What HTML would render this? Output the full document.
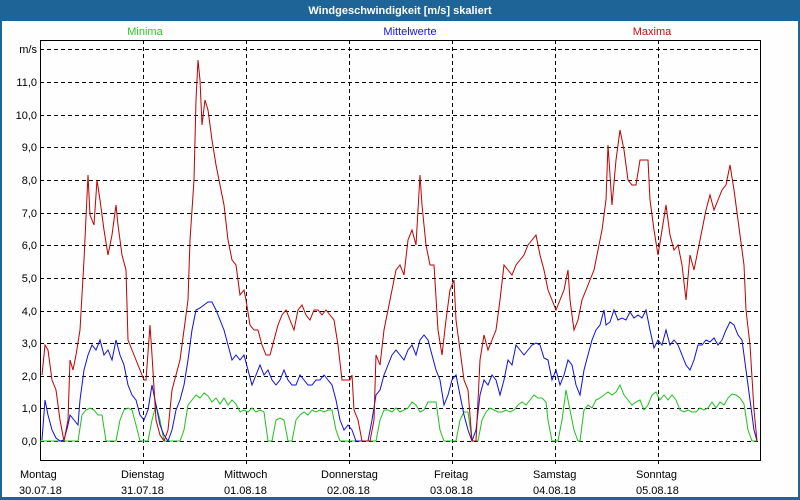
<!DOCTYPE html>
<html><head><meta charset="utf-8"><style>
html,body{margin:0;padding:0;width:800px;height:500px;overflow:hidden;background:#fff;font-family:"Liberation Sans",sans-serif;}
svg{display:block}
text{font-family:"Liberation Sans",sans-serif;font-size:11px;}
</style></head><body>
<svg width="800" height="500" viewBox="0 0 800 500">
<rect x="0" y="0" width="800" height="500" fill="#1e6496"/>
<rect x="2" y="21" width="796" height="476" fill="#fdfefd"/>
<text x="400" y="14" fill="#fff" font-weight="bold" font-size="11" text-anchor="middle">Windgeschwindigkeit [m/s] skaliert</text>
<text x="145" y="35" fill="#2ac82a" text-anchor="middle">Minima</text>
<text x="410" y="35" fill="#1515e0" text-anchor="middle">Mittelwerte</text>
<text x="652" y="35" fill="#c01010" text-anchor="middle">Maxima</text>
<g stroke="#000" stroke-width="1" stroke-dasharray="4,3" fill="none" shape-rendering="crispEdges">
<line x1="40" y1="49.5" x2="760" y2="49.5"/>
<line x1="40" y1="82.5" x2="760" y2="82.5"/>
<line x1="40" y1="115.5" x2="760" y2="115.5"/>
<line x1="40" y1="147.5" x2="760" y2="147.5"/>
<line x1="40" y1="180.5" x2="760" y2="180.5"/>
<line x1="40" y1="213.5" x2="760" y2="213.5"/>
<line x1="40" y1="245.5" x2="760" y2="245.5"/>
<line x1="40" y1="278.5" x2="760" y2="278.5"/>
<line x1="40" y1="311.5" x2="760" y2="311.5"/>
<line x1="40" y1="343.5" x2="760" y2="343.5"/>
<line x1="40" y1="376.5" x2="760" y2="376.5"/>
<line x1="40" y1="408.5" x2="760" y2="408.5"/>
<line x1="40" y1="441.5" x2="760" y2="441.5"/>
<line x1="143.5" y1="40" x2="143.5" y2="466"/>
<line x1="246.5" y1="40" x2="246.5" y2="466"/>
<line x1="349.5" y1="40" x2="349.5" y2="466"/>
<line x1="452.5" y1="40" x2="452.5" y2="466"/>
<line x1="555.5" y1="40" x2="555.5" y2="466"/>
<line x1="658.5" y1="40" x2="658.5" y2="466"/>
</g>
<rect x="40.5" y="40.5" width="720" height="420" fill="none" stroke="#000" stroke-width="1" shape-rendering="crispEdges"/>
<g fill="#000" text-anchor="end">
<text x="37" y="53">m/s</text>
<text x="37" y="86">11,0</text>
<text x="37" y="119">10,0</text>
<text x="37" y="151">9,0</text>
<text x="37" y="184">8,0</text>
<text x="37" y="217">7,0</text>
<text x="37" y="249">6,0</text>
<text x="37" y="282">5,0</text>
<text x="37" y="315">4,0</text>
<text x="37" y="347">3,0</text>
<text x="37" y="380">2,0</text>
<text x="37" y="412">1,0</text>
<text x="37" y="445">0,0</text>
</g>
<g fill="#000">
<text x="20" y="478">Montag</text><text x="19" y="494">30.07.18</text>
<text x="121" y="478">Dienstag</text><text x="121" y="494">31.07.18</text>
<text x="224" y="478">Mittwoch</text><text x="224" y="494">01.08.18</text>
<text x="321" y="478">Donnerstag</text><text x="327" y="494">02.08.18</text>
<text x="434" y="478">Freitag</text><text x="430" y="494">03.08.18</text>
<text x="533" y="478">Samstag</text><text x="533" y="494">04.08.18</text>
<text x="636" y="478">Sonntag</text><text x="636" y="494">05.08.18</text>
</g>
<polyline fill="none" stroke="#22c022" stroke-width="1" points="40,441 78,441 82,415 86,410 90,408 94,410 98,415 102,415 106,441 116,441 120,420 124,410 128,408 132,410 136,425 140,441 148,441 152,420 156,405 160,420 164,441 180,441 184,430 188,405 192,400 196,395 200,398 204,393 208,396 212,402 216,398 220,404 224,398 228,405 232,400 236,404 240,412 244,410 248,412 252,408 256,412 260,410 264,412 268,441 272,441 276,420 280,418 284,420 288,441 292,441 296,420 300,415 304,412 308,415 312,410 316,412 320,410 324,412 328,410 332,410 336,430 340,441 376,441 380,420 384,410 388,410 392,412 396,408 400,412 404,410 408,408 412,402 416,405 420,412 424,410 428,402 432,402 436,402 440,430 444,441 456,441 460,420 464,412 468,412 472,441 478,441 482,420 486,412 490,408 494,410 498,412 502,412 506,410 510,412 514,410 518,405 522,402 526,405 530,400 534,395 538,398 542,398 546,402 548,420 552,441 558,441 562,420 566,390 570,410 574,430 578,441 580,441 584,410 588,405 592,408 596,400 600,398 604,395 608,392 612,395 616,392 620,385 624,395 628,400 632,405 636,402 640,400 644,410 648,405 652,395 656,392 660,400 664,395 668,400 672,395 676,400 680,410 684,412 688,410 692,412 696,412 700,408 704,410 708,408 712,402 716,408 720,402 724,405 728,398 732,394 736,395 740,398 744,404 748,430 752,441 757,441"/>
<polyline fill="none" stroke="#1010e0" stroke-width="1" points="42,440 45,400 48,415 52,430 56,438 60,441 64,440 68,425 70,415 74,420 78,425 80,400 84,370 88,355 92,345 96,350 100,340 104,355 108,350 112,360 116,340 120,355 124,365 128,385 132,395 136,400 140,415 144,420 148,410 152,385 156,405 160,425 164,435 168,441 172,430 176,410 180,400 184,385 188,360 192,330 196,310 200,308 204,305 208,302 212,302 216,310 220,320 224,330 228,345 232,360 236,355 240,360 244,355 248,370 252,385 256,375 260,365 264,375 268,370 272,380 276,385 280,380 284,370 288,380 292,385 296,385 300,375 304,380 308,385 312,385 316,380 320,380 324,375 328,380 332,385 336,400 340,420 344,430 348,425 352,430 356,441 368,441 372,420 376,395 380,390 384,375 388,365 392,355 396,350 400,355 404,360 408,350 412,345 416,355 420,340 424,335 428,340 432,355 436,370 440,380 444,405 448,395 452,380 456,375 460,395 464,415 468,430 472,441 476,430 480,395 484,380 488,385 492,375 496,380 500,395 504,380 508,360 512,365 516,345 520,350 524,355 528,350 532,345 536,343 540,345 544,358 548,360 552,380 556,370 560,385 564,375 568,360 572,365 576,385 580,395 584,370 588,355 592,340 596,330 600,325 604,310 606,325 610,322 614,310 618,320 622,318 626,320 630,312 634,318 638,315 642,318 646,310 650,330 654,348 658,340 662,345 666,330 670,345 674,340 678,345 682,355 686,365 690,370 694,360 698,345 702,345 706,340 710,342 714,338 718,345 722,340 726,330 730,322 734,325 738,335 742,340 746,370 750,400 754,430 757,441"/>
<polyline fill="none" stroke="#c00000" stroke-width="1" points="42,375 45,345 48,350 52,380 56,390 60,420 64,441 68,420 70,360 73,370 76,355 80,330 84,260 88,175 90,215 94,225 97,180 100,200 104,230 108,255 112,235 116,205 118,225 122,255 126,270 128,340 132,350 136,360 140,370 144,380 146,380 150,325 152,355 156,420 160,435 164,441 168,430 172,390 176,375 180,360 184,330 188,300 190,240 194,180 196,100 198,60 200,80 202,125 205,100 208,110 212,140 216,165 220,185 224,205 228,240 232,260 236,265 240,295 244,290 246,300 250,325 254,330 258,330 262,345 266,355 270,355 274,340 278,325 282,315 286,310 290,320 294,330 298,310 302,305 306,315 310,320 314,310 318,310 322,315 326,310 330,315 334,320 338,345 342,380 346,380 350,380 352,375 354,410 358,420 362,441 370,441 374,420 376,355 380,365 384,330 388,310 392,290 396,270 400,265 404,275 408,240 412,230 416,245 420,175 422,205 426,245 430,265 434,265 438,330 442,355 446,320 450,290 454,280 456,320 460,350 464,380 468,390 472,441 476,441 480,360 484,335 488,350 492,340 496,330 500,300 504,265 508,270 512,275 516,265 520,260 524,255 528,245 532,240 536,235 540,255 544,270 548,290 552,300 556,310 560,300 564,290 568,270 570,300 574,330 578,320 582,300 586,290 590,280 594,270 598,250 602,230 606,200 608,145 612,205 616,160 620,130 624,150 628,180 632,185 636,185 640,160 644,160 648,160 650,200 654,230 658,255 662,230 666,205 670,235 674,250 678,245 682,265 686,300 690,255 694,270 698,250 702,230 706,210 710,195 714,210 718,200 722,190 726,185 730,165 734,190 738,220 742,250 744,265 746,310 750,345 754,410 757,441"/>
</svg>
</body></html>
